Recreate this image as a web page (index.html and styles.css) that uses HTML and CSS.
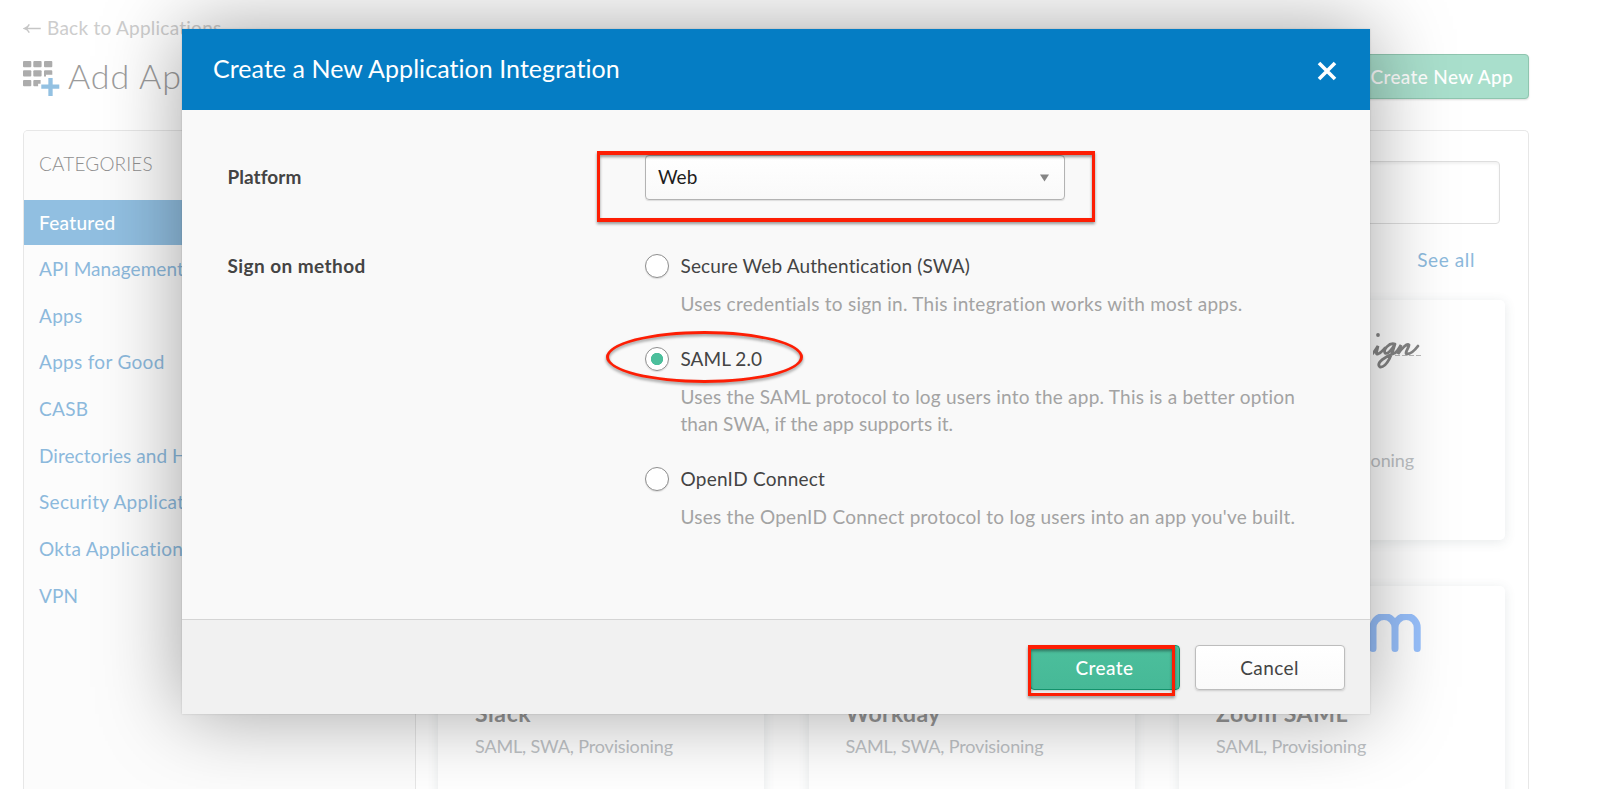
FILE: index.html
```html
<!DOCTYPE html>
<html lang="en">
<head>
<meta charset="utf-8">
<title>Create a New Application Integration</title>
<link rel="stylesheet" href="styles.css">
</head>
<body>
<div class="page">
  <div class="back"><svg class="back-arrow" viewBox="0 0 20 12"><path d="M19 6H1.5M6.5 1.5Q5 5 1.2 6Q5 7 6.5 10.5"/></svg><span>Back to Applications</span></div>
  <div class="head">
    <svg class="grid-icon" viewBox="0 0 37 35">
      <g fill="#acacac"><rect x="0" y="0" width="8.3" height="6.3" rx="1"/><rect x="10.3" y="0" width="8.3" height="6.3" rx="1"/><rect x="21" y="0" width="8.3" height="6.3" rx="1"/><rect x="0" y="9.3" width="8.3" height="6.3" rx="1"/><rect x="10.3" y="9.3" width="8.3" height="6.3" rx="1"/><path d="M22 9.3h6.3a1 1 0 0 1 1 1v3.4h-6.3v1.9h-2v-5.300a1 1 0 0 1 1-1z"/><rect x="0" y="19" width="8.300" height="6.300" rx="1"/><path d="M11.300 19h6.300v3.800h-2.500v2.500h-3.800a1 1 0 0 1-1-1v-4.300a1 1 0 0 1 1-1z"/></g>
      <path d="M27.500 17v18M18.300 25.700h18" stroke="#93c1e2" stroke-width="4.300" fill="none"/>
    </svg>
    <h1 class="title">Add Application</h1>
    <div class="new-app">Create New App</div>
  </div>
  <div class="panel">
    <nav class="side">
      <div class="side-title">CATEGORIES</div>
      <div class="cat active">Featured</div>
      <div class="cat c-api">API Management</div>
      <div class="cat">Apps</div>
      <div class="cat">Apps for Good</div>
      <div class="cat">CASB</div>
      <div class="cat c-dir">Directories and HR Systems</div>
      <div class="cat c-sec">Security Applications</div>
      <div class="cat c-okta">Okta Applications</div>
      <div class="cat c-api">VPN</div>
    </nav>
    <main class="main">
      <div class="search"></div>
      <div class="see-all">See all</div>
      <div class="cards">
        <div class="card"></div>
        <div class="card"></div>
        <div class="card">
          <svg class="logo sign" viewBox="0 0 60 40"><g fill="none" stroke="#858585" stroke-width="2.800" stroke-linecap="round"><path d="M-2 22C1 20 3 16 5 13C4 18 2 22 5 21C8 20 10 17 12 15"/><path d="M22 11C16 9 10 17 12 20C15 22 20 15 22 11C20 19 14 35 7 34C2 30 13 23 22 20C25 18 26 15 28 12C27 15 26 18 25 21C29 15 34 10 36 12C36 15 31 20 34 21C38 21 42 17 45 13"/></g><circle cx="5" cy="2" r="1.900" fill="#858585"/><path d="M22 22.500H49" stroke="#bbb" stroke-width="1.200" stroke-dasharray="5 2"/></svg>
          <div class="card-sub">SAML, SWA, Provisioning</div>
        </div>
        <div class="card"><div class="card-title t-slack">Slack</div><div class="card-sub">SAML, SWA, Provisioning</div></div>
        <div class="card"><div class="card-title t-work">Workday</div><div class="card-sub">SAML, SWA, Provisioning</div></div>
        <div class="card">
          <svg class="logo zoom" viewBox="0 0 60 38"><path d="M12 34.500V13.500A8.800 8.800 0 0 1 34 13.500V34.500M34 13.500A10.500 10.500 0 0 1 56.200 13.500V34.500" fill="none" stroke="#98c1fd" stroke-width="7" stroke-linecap="round"/></svg>
          <div class="card-title t-zoom">Zoom SAML</div><div class="card-sub s-zoom">SAML, Provisioning</div>
        </div>
      </div>
    </main>
  </div>
</div>

<div class="modal">
  <header class="modal-head"><h2 class="modal-title">Create a New Application Integration</h2>
    <svg class="close" viewBox="0 0 20 20"><path d="M2 2L18 18M18 2L2 18" stroke="#fff" stroke-width="3.600"/></svg>
  </header>
  <div class="modal-body">
    <div class="row">
      <div class="label l-plat">Platform</div>
      <div class="select"><span>Web</span><svg class="caret" viewBox="0 0 10 8"><path d="M0 0H10L5 8Z" fill="#858585"/></svg></div>
    </div>
    <div class="row methods">
      <div class="label l-sign">Sign on method</div>
      <div class="options">
        <div class="option"><div class="opt-line"><i class="radio"></i><span class="o1">Secure Web Authentication (SWA)</span></div>
          <p class="desc"><span class="d1">Uses credentials to sign in. This integration works with most apps.</span></p></div>
        <div class="option"><div class="opt-line"><i class="radio on"></i><span class="o2">SAML 2.0</span></div>
          <p class="desc"><span class="d2">Uses the SAML protocol to log users into the app. This is a better option</span><br><span class="d3">than SWA, if the app supports it.</span></p></div>
        <div class="option"><div class="opt-line"><i class="radio"></i><span class="o3">OpenID Connect</span></div>
          <p class="desc"><span class="d4">Uses the OpenID Connect protocol to log users into an app you've built.</span></p></div>
      </div>
    </div>
  </div>
  <footer class="modal-foot"><div class="btn create">Create</div><div class="btn cancel">Cancel</div></footer>
</div>
<div class="mark mark-platform"></div>
<div class="mark mark-saml"></div>
<div class="mark mark-create"></div>
</body>
</html>
```
FILE: styles.css
```css
* { box-sizing: border-box; }
body { margin: 0; width: 1600px; height: 789px; overflow: hidden; position: relative; background: #fff; font-family: Lato, "Open Sans", sans-serif; font-size: 19px; white-space: nowrap; font-variant-ligatures: none; }
.page { width: 1506px; margin-left: 23px; height: 789px; overflow: visible; padding-top: 16px; display: flex; flex-direction: column; }
.back { height: 24px; line-height: 24px; color: #cdcdcd; display: flex; align-items: center; gap: 5px; letter-spacing: .25px; }
.back-arrow { width: 19px; height: 11px; fill: none; stroke: #c6c6c6; stroke-width: 1.5; }
.head { height: 90px; padding-top: 14px; display: flex; align-items: flex-start; }
.grid-icon { width: 37px; height: 35px; margin-top: 7px; }
.title { margin: 0 0 0 8px; font-size: 34px; font-weight: 300; line-height: 44px; color: #9c9c9c; letter-spacing: .9px; }
.new-app { margin-left: auto; width: 190px; height: 45px; border: 1px solid #8fc5af; border-radius: 4px; background: #a9dfcc; color: #fff; line-height: 43px; text-align: right; padding-right: 15px; box-shadow: 0 1px 2px #ddd; font-weight: 500; letter-spacing: .35px; }
.panel { flex: 1; display: flex; border: 1px solid #e7e7e7; border-bottom: 0; border-radius: 5px 5px 0 0; min-height: 0; overflow: hidden; }
.side { width: 392px; border-right: 1px solid #e6e6e6; background: #fcfcfc; }
.side-title { height: 69px; padding: 21px 0 0 15px; line-height: 23px; color: #909090; font-size: 19px; font-weight: 300; letter-spacing: .15px; }
.cat { height: 46.700px; line-height: 46.700px; padding-left: 15px; color: #8cb9dc; letter-spacing: .3px; }
.cat.active { height: 45px; line-height: 45px; background: #91bfe1; color: #fff; font-weight: 500; margin-bottom: 1px; }
.cat.c-api, .cat.c-dir { letter-spacing: .06px; }
.main { width: 1090px; padding: 30px 0 0 22px; }
.search { width: 1062px; height: 63px; border: 1px solid #dedede; border-radius: 4px; box-shadow: inset 0 2px 3px #f2f2f2; }
.see-all { text-align: right; width: 1037px; height: 76px; padding-top: 24px; line-height: 24px; color: #8cb9dc; letter-spacing: .6px; }
.cards { display: grid; grid-template-columns: repeat(3, 326px); column-gap: 44.500px; grid-template-rows: 240px 240px; row-gap: 46px; }
.card { border-radius: 5px; background: #fff; box-shadow: 0 2px 12px rgba(60,80,90,.12); padding-left: 37px; position: relative; }
.card-sub { position: absolute; top: 148px; line-height: 24px; color: #bec2c5; font-size: 18px; letter-spacing: -.15px; }
.card-title { position: absolute; top: 113px; line-height: 28px; color: #979797; font-size: 23px; font-weight: 700; letter-spacing: .6px; }
.t-work { letter-spacing: .3px; }
.logo { position: absolute; }
.sign { left: 194px; top: 33px; width: 60px; height: 40px; }
.zoom { left: 182px; top: 28px; width: 60px; height: 38px; }
.modal { position: absolute; left: 182px; top: 29px; width: 1187.500px; height: 685px; background: #f9f9f9; box-shadow: 0 0 76px rgba(0,0,0,.36), 0 0 2px rgba(0,0,0,.15); display: flex; flex-direction: column; }
.modal-head { height: 81px; background: #057dc4; display: flex; justify-content: space-between; padding: 0 32.500px 0 31px; }
.modal-title { margin: 0; color: #fff; font-size: 25px; font-weight: 400; line-height: 78px; letter-spacing: .05px; }
.close { width: 20px; height: 20px; margin-top: 32px; }
.modal-body { flex: 1; padding: 45px 0 0 45.500px; }
.row { display: flex; }
.label { width: 417.500px; color: #444; font-weight: 700; line-height: 43px; }
.l-plat { letter-spacing: .05px; }
.l-sign { letter-spacing: .43px; }
.select { width: 420px; height: 45px; border: 1px solid #b3b3b3; border-radius: 4px; background: linear-gradient(#fff, #f9f9f9); box-shadow: 0 1px 1px #ddd; display: flex; align-items: center; justify-content: space-between; padding: 0 15px 2px 12px; color: #1d1d1d; }
.caret { width: 9px; height: 8px; margin-top: 3px; }
.methods { margin-top: 54px; }
.methods .label { line-height: 23px; }
.option { margin-bottom: 30.700px; }
.opt-line { height: 24px; line-height: 23px; display: flex; gap: 11.500px; color: #444; }
.radio { width: 24px; height: 24px; border: 1px solid #8e8e8e; border-radius: 50%; background: #fff; box-shadow: 0 1px 1px #ddd; }
.radio.on { background: radial-gradient(circle, #4cbf9c 5.800px, #fff 6.500px); }
.desc { margin: 11.500px 0 0 35.500px; line-height: 27px; color: #a3a3a3; }
.o1 { letter-spacing: .14px; }
.o2 { letter-spacing: .05px; }
.o3 { letter-spacing: .25px; }
.d1, .d4 { letter-spacing: .25px; }
.d2 { letter-spacing: .235px; }
.d3 { letter-spacing: .06px; }
.modal-foot { height: 95px; border-top: 1px solid #d5d5d5; background: #f1f1f1; display: flex; justify-content: flex-end; gap: 15px; padding: 25px 25px 0 0; }
.btn { width: 150px; height: 45px; line-height: 43px; text-align: center; border-radius: 4px; letter-spacing: .4px; }
.create { background: linear-gradient(#4cbf9c, #46b997); color: #fff; border: 1px solid #14926c; font-weight: 500; box-shadow: 0 1px 2px #ccc; }
.cancel { background: linear-gradient(#fff, #fafafa); color: #444; border: 1px solid #bdbdbd; box-shadow: 0 1px 2px #ccc; }
.mark { position: absolute; border: 3px solid #fd1e04; filter: drop-shadow(0 2px 1.500px rgba(0,0,0,.4)); }
.mark-platform { left: 597px; top: 151px; width: 498px; height: 71px; border-width: 4px 3px; }
.mark-saml { left: 606px; top: 331px; width: 197px; height: 52px; border-radius: 50%; }
.mark-create { left: 1028px; top: 645px; width: 147px; height: 51px; border-top-width: 4px; }
```
